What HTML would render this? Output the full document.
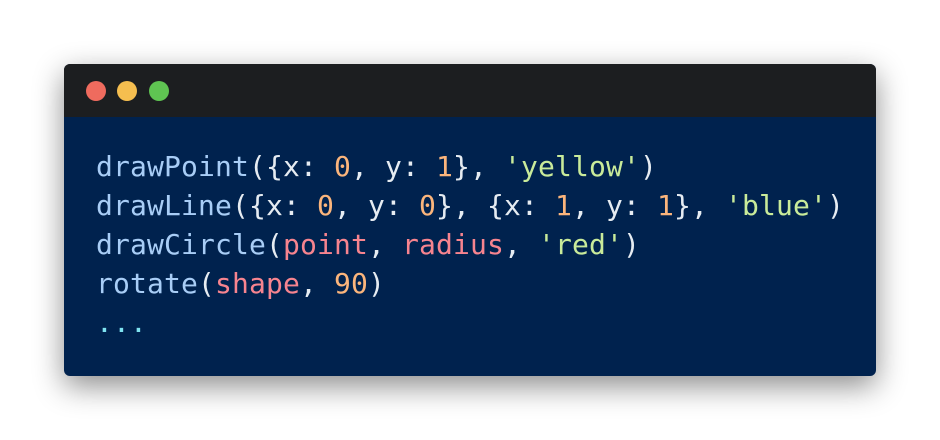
<!DOCTYPE html>
<html><head><style>
html,body{margin:0;padding:0;background:#fff;width:940px;height:440px;overflow:hidden}
.win{position:absolute;left:64px;top:64px;width:812px;height:312px;border-radius:6px;overflow:hidden;background:#00224e;box-shadow:0 10px 30px rgba(0,0,0,0.45)}
.bar{height:53px;background:#1c1e20;position:relative}
.d{position:absolute;top:17px;width:20px;height:20px;border-radius:50%}
pre{margin:0;position:absolute;left:32px;top:83px;font-family:"DejaVu Sans Mono","Liberation Mono",monospace;font-size:28px;line-height:39px;letter-spacing:0.14px;color:#e6ecf2}
.f{color:#a8cdf6}.n{color:#fbb57c}.s{color:#c9eb9a}.p{color:#f7848f}.c{color:#7fe3f0}
</style></head><body>
<div class="win"><div class="bar">
<div class="d" style="left:22px;background:#ef6b5e"></div>
<div class="d" style="left:53px;background:#f5be4f"></div>
<div class="d" style="left:85px;background:#5fc452"></div>
</div>
<pre><span class="f">drawPoint</span>({x: <span class="n">0</span>, y: <span class="n">1</span>}, <span class="s">'yellow'</span>)
<span class="f">drawLine</span>({x: <span class="n">0</span>, y: <span class="n">0</span>}, {x: <span class="n">1</span>, y: <span class="n">1</span>}, <span class="s">'blue'</span>)
<span class="f">drawCircle</span>(<span class="p">point</span>, <span class="p">radius</span>, <span class="s">'red'</span>)
<span class="f">rotate</span>(<span class="p">shape</span>, <span class="n">90</span>)
<span class="c">...</span></pre>
</div>
</body></html>
